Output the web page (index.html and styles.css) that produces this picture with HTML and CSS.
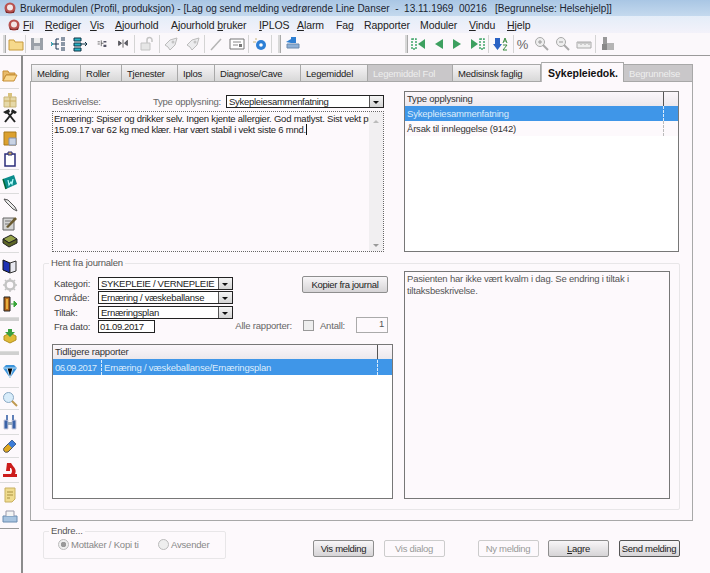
FILE: index.html
```html
<!DOCTYPE html>
<html lang="no">
<head>
<meta charset="utf-8">
<title>Brukermodulen</title>
<link rel="stylesheet" href="styles.css">
</head>
<body>
<svg class="defs" width="0" height="0">
  <symbol id="logo" viewBox="0 0 16 16"><circle cx="8" cy="8" r="5.500" fill="#b9524f"/><circle cx="8" cy="7.500" r="3" fill="#f3e6e6"/><path d="M3 10q5 5 10 0l-1 3H4z" fill="#7b2a2a"/></symbol>
  <symbol id="folder" viewBox="0 0 16 16"><path d="M1 4h5l1 2h8v8H1z" fill="#f6d98c" stroke="#c79a3c"/></symbol>
  <symbol id="folderopen" viewBox="0 0 16 16"><path d="M1 4h5l1 2h6v2H4l-3 6z" fill="#e8bb6b" stroke="#c58d35"/><path d="M4 8h11l-3 6H1z" fill="#f9d88f" stroke="#c58d35"/></symbol>
  <symbol id="save" viewBox="0 0 16 16"><path d="M2 2h12v12H2z" fill="#9aa0a8"/><path d="M5 2h6v5H5z" fill="#eee"/><path d="M5 10h6v4H5z" fill="#cfd2d6"/></symbol>
  <symbol id="tree1" viewBox="0 0 16 16"><path d="M1 8h5M6 3v10M6 3h3M6 8h3M6 13h3M11 2h4M11 4h4M11 7h4M11 9h4M11 12h4M11 14h4" stroke="#1b3450" fill="none"/><path d="M1 6l2 2-2 2" stroke="#18a8b8" fill="none"/></symbol>
  <symbol id="tree2" viewBox="0 0 16 16"><path d="M2 2h7v3H2zM2 7h7v3H2zM2 12h7v3H2z" fill="#29b6c8" stroke="#134"/><path d="M9 8h6M13 6l2 2-2 2" stroke="#134" fill="none"/></symbol>
  <symbol id="tree3" viewBox="-3 -3 22 22"><path d="M2 5h3M2 8h3M7 3v8M7 7h3" stroke="#444" fill="none"/><path d="M10 4h4v2h-4zM10 9h4v3h-4z" fill="#556"/></symbol>
  <symbol id="tree4" viewBox="-3 -3 22 22"><path d="M2 4l4 3-4 3zM14 3l-4 4 4 3zM8 2v11" stroke="#333" fill="#667"/></symbol>
  <symbol id="lock" viewBox="0 0 16 16"><path d="M2 7h9v7H2z" fill="#e6e6e6" stroke="#c4c4c4"/><path d="M8 7V4a2.500 2.500 0 0 1 5 0v2" fill="none" stroke="#c4c4c4" stroke-width="1.500"/></symbol>
  <symbol id="rocket" viewBox="0 0 16 16"><path d="M14 2l-2 7-5 5-2-3-3-2 5-5z" fill="#ececee" stroke="#bbb"/><circle cx="10" cy="6" r="1.500" fill="#c4c4c4"/></symbol>
  <symbol id="pen" viewBox="0 0 16 16"><path d="M3 14L13 3" stroke="#b4b4b4" stroke-width="1.500"/></symbol>
  <symbol id="box" viewBox="0 0 16 16"><path d="M1 3h14v10H1z" fill="#fff" stroke="#777"/><path d="M4 6h8M4 9h5" stroke="#888"/><path d="M10 8h3v3h-3z" fill="#777"/></symbol>
  <symbol id="disc" viewBox="0 0 16 16"><circle cx="9" cy="9" r="5" fill="#2d7fd6"/><circle cx="9" cy="9" r="1.800" fill="#fff"/><path d="M1 6h3M3 3h2" stroke="#c9b47a"/></symbol>
  <symbol id="print" viewBox="0 0 16 16"><path d="M6 1h5v6H6z" fill="#2f7fd2"/><path d="M2 8h12v4H2z" fill="#8fb0d6" stroke="#6b89ad"/><path d="M1 6l5-3v4z" fill="#2f7fd2"/></symbol>
  <symbol id="first" viewBox="0 0 16 16"><path d="M2 3h4v10H2z" fill="none" stroke="#43a56b" stroke-width="1.500" stroke-dasharray="2 1"/><path d="M15 3v10L8 8z" fill="#3da060"/></symbol>
  <symbol id="prev" viewBox="0 0 16 16"><path d="M13 3v10L5 8z" fill="#3da060"/></symbol>
  <symbol id="next" viewBox="0 0 16 16"><path d="M3 3v10l8-5z" fill="#3da060"/></symbol>
  <symbol id="last" viewBox="0 0 16 16"><path d="M10 3h4v10h-4z" fill="none" stroke="#43a56b" stroke-width="1.500" stroke-dasharray="2 1"/><path d="M1 3v10l7-5z" fill="#3da060"/></symbol>
  <symbol id="sort" viewBox="0 0 16 16"><path d="M2 2h5v6h2l-4.500 6L0 8h2z" fill="#2a62c4"/><path d="M10 7l2-5 2 5M11 5h2M10 9h4l-4 5h4" fill="none" stroke="#3a8a40"/></symbol>
  <symbol id="zoomin" viewBox="0 0 16 16"><circle cx="6" cy="6" r="4.500" fill="#eee" stroke="#a9a9a9"/><path d="M9 9l5 5" stroke="#a9a9a9" stroke-width="2"/><path d="M4 6h4M6 4v4" stroke="#999"/></symbol>
  <symbol id="zoomout" viewBox="0 0 16 16"><circle cx="6" cy="6" r="4.500" fill="#eee" stroke="#a9a9a9"/><path d="M9 9l5 5" stroke="#a9a9a9" stroke-width="2"/><path d="M4 6h4" stroke="#999"/></symbol>
  <symbol id="ruler" viewBox="0 0 16 16"><path d="M1 6h14v6H1z" fill="#eee" stroke="#aaa"/><path d="M3 6v2M5 6v3M7 6v2M9 6v3M11 6v2M13 6v3" stroke="#aaa"/></symbol>
  <symbol id="bag" viewBox="0 0 16 16"><path d="M3 1h4v7H3z" fill="#999"/><path d="M7 7h7v7H7z" fill="#b5b5b5"/><path d="M2 8h5v6H2z" fill="#888"/></symbol>
  <symbol id="pack" viewBox="0 0 16 16"><path d="M2 5h12v10H2z" fill="#e6d8a8" stroke="#c8b57a"/><path d="M6 1h4v4H6z" fill="#d9c27e"/><path d="M2 9h12" stroke="#c8a85a"/><path d="M8 5v10" stroke="#c8a85a"/></symbol>
  <symbol id="tools" viewBox="0 0 16 16"><path d="M3 14L11 4M13 14L5 4" stroke="#222" stroke-width="2"/><path d="M1 4l6-3 1 3-4 2zM15 4l-5-3-1 3 4 2z" fill="#222"/></symbol>
  <symbol id="note" viewBox="0 0 16 16"><path d="M2 1h12v13H2z" fill="#dca02e" stroke="#a87818"/><path d="M7 7h7v7H7z" fill="#c9d3e4" stroke="#8090b0"/></symbol>
  <symbol id="clip" viewBox="0 0 16 16"><path d="M3 3h10v12H3z" fill="#fff" stroke="#2b2c7a" stroke-width="1.500"/><path d="M6 1h4v3H6z" fill="#c9a85a" stroke="#2b2c7a"/></symbol>
  <symbol id="wbook" viewBox="0 0 16 16"><path d="M1 5l11-4 3 9-11 5z" fill="#0c8c8c"/><path d="M1 5l3 10" stroke="#063" stroke-width="1.500"/><path d="M6 6l1 5 2-3 1 2 1-5" fill="none" stroke="#bff" stroke-width="1.200"/></symbol>
  <symbol id="pin" viewBox="0 0 16 16"><path d="M2 2l4 1 7 7 2 4-4-2-7-7z" fill="#e8e8e8" stroke="#555"/></symbol>
  <symbol id="pdoc" viewBox="0 0 16 16"><path d="M1 3h11v12H1z" fill="#d4d4d4" stroke="#666"/><path d="M4 12l9-10 2 2-9 9z" fill="#6a5a30"/><path d="M3 6h6M3 9h4" stroke="#777"/></symbol>
  <symbol id="gbook" viewBox="0 0 16 16"><path d="M1 6l8-4 6 4-8 4z" fill="#96a24a" stroke="#222"/><path d="M1 6v4l6 4 8-4V6l-8 4z" fill="#5c6426" stroke="#222"/></symbol>
  <symbol id="bluebook" viewBox="0 0 16 16"><path d="M1 2l7 3v10l-7-3z" fill="#1e30b4" stroke="#111"/><path d="M8 5l6-2v10l-6 2z" fill="#e8e8f0" stroke="#333"/></symbol>
  <symbol id="gear" viewBox="0 0 16 16"><circle cx="8" cy="8" r="4.500" fill="none" stroke="#c4c4c4" stroke-width="2.500"/><path d="M8 1v3M8 12v3M1 8h3M12 8h3M3 3l2 2M11 11l2 2M13 3l-2 2M3 13l2-2" stroke="#c4c4c4" stroke-width="1.500"/></symbol>
  <symbol id="door" viewBox="0 0 16 16"><path d="M2 1h6v14H2z" fill="#b5671a" stroke="#222"/><path d="M4 3h2v10H4z" fill="#e8b040"/><path d="M9 8h3M12 5l3 3-3 3z" fill="#3aa63a" stroke="#3aa63a"/></symbol>
  <symbol id="gold" viewBox="0 0 16 16"><path d="M2 8l6-3 6 3v4l-6 3-6-3z" fill="#e0bb38" stroke="#b49020"/><path d="M6 1h4v3h3l-5 5-5-5h3z" fill="#3aa040"/></symbol>
  <symbol id="gem" viewBox="0 0 16 16"><path d="M1 5l3-3h8l3 3-7 10z" fill="#3c94dc"/><path d="M1 5h14M5 5l3 10 3-10" stroke="#bfe0f8"/></symbol>
  <symbol id="mag" viewBox="0 0 16 16"><circle cx="6.500" cy="6.500" r="5" fill="#d8ecfa" stroke="#8aa9c4"/><path d="M10 10l5 5" stroke="#c09a50" stroke-width="2"/></symbol>
  <symbol id="binoc" viewBox="0 0 16 16"><path d="M2 6h4v9H2zM10 6h4v9h-4z" fill="#3a62a8" stroke="#ccd"/><path d="M4 1h2v5H4zM10 1h2v5h-2z" fill="#5f7fb8"/><path d="M6 8h4v3H6z" fill="#9ab"/></symbol>
  <symbol id="pill" viewBox="0 0 16 16"><path d="M2 10l8-8 4 4-8 8q-3 1-4-1t0-3" fill="#e0a820" stroke="#555"/><path d="M6 6l4-4 4 4-4 4z" fill="#3c7cd8"/></symbol>
  <symbol id="micro" viewBox="0 0 16 16"><path d="M5 1h4l2 3q4 4 2 8h2v3H1v-3h8q2-3 0-6H8v3H4z" fill="#cc1c1c"/></symbol>
  <symbol id="ynote" viewBox="0 0 16 16"><path d="M3 1h10v11l-3 3H3z" fill="#f0dc90" stroke="#c8b060"/><path d="M5 5h6M5 8h6M5 11h3" stroke="#a89040"/></symbol>
  <symbol id="tray" viewBox="0 0 16 16"><path d="M1 8h14v6H1z" fill="#a8c4e0" stroke="#6a8cb0"/><path d="M4 8V3h8v5" fill="#f4f4f4" stroke="#99a"/></symbol>
</svg>

<header class="titlebar"><svg class="ic"><use href="#logo"/></svg><span class="title-text">Brukermodulen (Profil, produksjon) - [Lag og send melding vedrørende Line Danser&nbsp; -&nbsp; 13.11.1969&nbsp; 00216&nbsp;&nbsp; [Begrunnelse: Helsehjelp]]</span></header>

<nav class="menubar">
  <svg class="ic menu-logo"><use href="#logo"/></svg>
  <span class="mi m-fil"><u>F</u>il</span>
  <span class="mi m-red"><u>R</u>ediger</span>
  <span class="mi m-vis"><u>V</u>is</span>
  <span class="mi m-aj"><u>A</u>jourhold</span>
  <span class="mi m-ajb">Ajourhold <u>b</u>ruker</span>
  <span class="mi m-ipl"><u>I</u>PLOS</span>
  <span class="mi m-ala"><u>A</u>larm</span>
  <span class="mi m-fag">Fag</span>
  <span class="mi m-rap">Rapporter</span>
  <span class="mi m-mod">Moduler</span>
  <span class="mi m-vin"><u>V</u>indu</span>
  <span class="mi m-hje"><u>H</u>jelp</span>
</nav>

<div class="toolbar">
  <span class="handle"></span>
  <div class="tg w-a"><svg class="ic"><use href="#folder"/></svg></div>
  <div class="tg w-b"><svg class="ic"><use href="#save"/></svg><svg class="ic"><use href="#tree1"/></svg><svg class="ic"><use href="#tree2"/></svg><svg class="ic"><use href="#tree3"/></svg><svg class="ic"><use href="#tree4"/></svg></div>
  <div class="tg w-c"><svg class="ic"><use href="#lock"/></svg></div>
  <div class="tg w-d"><svg class="ic"><use href="#rocket"/></svg><svg class="ic"><use href="#rocket"/></svg></div>
  <div class="tg w-e"><svg class="ic"><use href="#pen"/></svg><svg class="ic"><use href="#box"/></svg></div>
  <div class="tg w-f"><svg class="ic"><use href="#disc"/></svg></div>
  <span class="handle h-mid"></span>
  <div class="tg w-g"><svg class="ic"><use href="#print"/></svg></div>
  <span class="handle h-right"></span>
  <div class="tg w-h"><svg class="ic"><use href="#first"/></svg><svg class="ic"><use href="#prev"/></svg><svg class="ic"><use href="#next"/></svg><svg class="ic"><use href="#last"/></svg></div>
  <div class="tg w-i"><svg class="ic"><use href="#sort"/></svg></div>
  <div class="tg w-j"><span class="pct">%</span><svg class="ic"><use href="#zoomin"/></svg><svg class="ic"><use href="#zoomout"/></svg><svg class="ic"><use href="#ruler"/></svg></div>
  <div class="tg w-k"><svg class="ic"><use href="#bag"/></svg></div>
</div>

<div class="workspace">
  <aside class="sidebar">
    <div class="sg h27"><svg class="ic"><use href="#folderopen"/></svg></div>
    <div class="sg h39"><svg class="ic"><use href="#pack"/></svg><svg class="ic"><use href="#tools"/></svg></div>
    <div class="sg h42 g4"><svg class="ic"><use href="#note"/></svg><svg class="ic"><use href="#clip"/></svg></div>
    <div class="sg h24"><svg class="ic"><use href="#wbook"/></svg></div>
    <div class="sg h59 g2"><svg class="ic"><use href="#pin"/></svg><svg class="ic"><use href="#pdoc"/></svg><svg class="ic"><use href="#gbook"/></svg></div>
    <div class="sg h65 g3"><svg class="ic"><use href="#bluebook"/></svg><svg class="ic"><use href="#gear"/></svg><svg class="ic"><use href="#door"/></svg></div>
    <div class="sg h34 grip"><svg class="ic"><use href="#gold"/></svg></div>
    <div class="sg h36 grip"><svg class="ic"><use href="#gem"/></svg></div>
    <div class="sg h22"><svg class="ic"><use href="#mag"/></svg></div>
    <div class="sg h25"><svg class="ic"><use href="#binoc"/></svg></div>
    <div class="sg h23"><svg class="ic"><use href="#pill"/></svg></div>
    <div class="sg h25"><svg class="ic"><use href="#micro"/></svg></div>
    <div class="sg h46 g5 sg-end"><svg class="ic"><use href="#ynote"/></svg><svg class="ic"><use href="#tray"/></svg></div>
  </aside>

  <main class="main">
    <div class="tabs">
      <span class="tab t50">Melding</span>
      <span class="tab t41">Roller</span>
      <span class="tab t56">Tjenester</span>
      <span class="tab t37">Iplos</span>
      <span class="tab t86">Diagnose/Cave</span>
      <span class="tab t67">Legemiddel</span>
      <span class="tab t85 off">Legemiddel Fol</span>
      <span class="tab t88">Medisinsk faglig</span>
      <span class="tab t83 active">Sykepleiedok.</span>
      <span class="tab t69 off">Begrunnelse</span>
    </div>

    <section class="panel">
      <div class="top">
        <div class="top-left">
          <div class="desc-row">
            <span class="lbl desc-lbl">Beskrivelse:</span>
            <span class="lbl">Type opplysning:</span>
            <span class="combo c-type"><span class="combo-v">Sykepleiesammenfatning</span><span class="combo-b"></span></span>
          </div>
          <div class="editor">
            <p class="editor-text">Ernæring: Spiser og drikker selv. Ingen kjente allergier. God matlyst. Sist vekt pr<br>15.09.17 var 62 kg med klær. Har vært stabil i vekt siste 6 mnd.<span class="caret"></span></p>
            <div class="scroll"><span class="up"></span><span class="down"></span></div>
          </div>
        </div>
        <div class="list l-type">
          <div class="list-head"><span class="hc-main">Type opplysning</span><span class="hc-end"></span></div>
          <div class="row sel"><span class="cell-main">Sykepleiesammenfatning</span><span class="cell-end"></span></div>
          <div class="row"><span class="cell-main">Årsak til innleggelse (9142)</span><span class="cell-end"></span></div>
        </div>
      </div>

      <fieldset class="group hent">
        <legend class="legend">Hent fra journalen</legend>
        <div class="hent-body">
          <div class="hent-left">
            <div class="form">
              <div class="fields">
                <span class="lbl dark">Kategori:</span><span class="combo c-f"><span class="combo-v">SYKEPLEIE / VERNEPLEIE</span><span class="combo-b"></span></span>
                <span class="lbl dark">Område:</span><span class="combo c-f"><span class="combo-v">Ernæring / væskeballanse</span><span class="combo-b"></span></span>
                <span class="lbl dark">Tiltak:</span><span class="combo c-f"><span class="combo-v">Ernæringsplan</span><span class="combo-b"></span></span>
                <span class="lbl dark">Fra dato:</span><span class="date">01.09.2017</span>
              </div>
              <div class="form-right">
                <button class="btn kopier" type="button">Kopier fra journal</button>
                <div class="alle">
                  <span class="lbl">Alle rapporter:</span>
                  <span class="check"></span>
                  <span class="lbl">Antall:</span>
                  <span class="count">1</span>
                </div>
              </div>
            </div>
            <div class="list l-rep">
              <div class="list-head"><span class="hc-main">Tidligere rapporter</span><span class="hc-end"></span></div>
              <div class="row sel"><span class="cell-date">06.09.2017</span><span class="cell-main">Ernæring / væskeballanse/Ernæringsplan</span><span class="cell-end"></span></div>
            </div>
          </div>
          <div class="journal">Pasienten har ikke vært kvalm i dag. Se endring i tiltak i tiltaksbeskrivelse.</div>
        </div>
      </fieldset>
    </section>

    <div class="footer">
      <fieldset class="group endre">
        <legend class="legend">Endre...</legend>
        <div class="endre-body">
          <span class="radio on"></span><span class="lbl r-lbl r-first">Mottaker / Kopi ti</span>
          <span class="radio"></span><span class="lbl r-lbl">Avsender</span>
        </div>
      </fieldset>
      <div class="actions">
        <button class="btn" type="button">Vis melding</button>
        <button class="btn dis" type="button">Vis dialog</button>
        <button class="btn dis gap-l" type="button">Ny melding</button>
        <button class="btn" type="button"><u>L</u>agre</button>
        <button class="btn strong" type="button">Send melding</button>
      </div>
    </div>
  </main>
</div>
</body>
</html>
```
FILE: styles.css
```css
* { box-sizing: border-box; }
html, body { margin: 0; padding: 0; }
body {
  width: 710px; height: 573px; overflow: hidden;
  background: #fdf9fc;
  font-family: "Liberation Sans", Arial, sans-serif;
  font-size: 9.500px; letter-spacing: -.2px; color: #222;
  display: flex; flex-direction: column;
}
.defs { position: absolute; }
.ic { width: 16px; height: 16px; flex: none; display: block; }

.titlebar {
  height: 16px; flex: none; display: flex; align-items: center; padding-left: 2px; gap: 2px;
  background: linear-gradient(#a9c6e4, #c4d9ee);
  font-size: 10px; letter-spacing: 0; color: #1a2430; white-space: pre;
}

.menubar {
  height: 17px; flex: none; display: flex; align-items: center; padding-left: 6px;
  background: linear-gradient(#e4edf8, #f3f2fa);
  font-size: 10.500px; letter-spacing: -.1px; color: #222;
}
.menu-logo { margin-right: 1px; }
.mi { display: block; flex: none; white-space: nowrap; }
.m-fil { width: 22px; }
.m-red { width: 45px; }
.m-vis { width: 25px; }
.m-aj { width: 56px; }
.m-ajb { width: 88px; }
.m-ipl { width: 38px; }
.m-ala { width: 39px; }
.m-fag { width: 28px; }
.m-rap { width: 56px; }
.m-mod { width: 49px; }
.m-vin { width: 38px; }

.toolbar {
  height: 23px; flex: none; display: flex; align-items: center; padding-left: 3px;
  background: #fbf8fb; border-bottom: 1px solid #9a9a9a;
}
.handle { width: 3px; height: 18px; background: #d8d8d8; border-right: 1px solid #aaa; flex: none; }
.h-mid { margin-left: 6px; }
.h-right { margin-left: 100px; }
.tg { height: 18px; flex: none; display: flex; align-items: center; justify-content: space-around; border-right: 1px solid #d4d4d4; }
.w-a { width: 20px; }
.w-b { width: 109px; }
.w-c { width: 25px; }
.w-d { width: 45px; }
.w-e { width: 44px; }
.w-f { width: 23px; }
.w-g { width: 24px; border-right: 0; }
.w-h { width: 81px; }
.w-i { width: 25px; }
.w-j { width: 82px; }
.w-k { width: 23px; border-right: 0; }
.pct { font-size: 13px; letter-spacing: 0; color: #666; }

.workspace { flex: 1; display: flex; min-height: 0; }
.sidebar {
  width: 23px; flex: none; padding-top: 6px; padding-right: 2px;
  border-right: 2px solid #8c8c8c; background: #fdf9fc;
}
.sg { display: flex; flex-direction: column; align-items: center; justify-content: center; border-bottom: 1px solid #dcdcdc; }
.sg-end { border-bottom-color: #999; }
.grip { border-top: 3px solid #d0d0d0; }
.g2 { gap: 2px; } .g3 { gap: 3px; } .g4 { gap: 4px; } .g5 { gap: 5px; }
.h22 { height: 22px; } .h23 { height: 23px; } .h24 { height: 24px; } .h25 { height: 25px; }
.h27 { height: 27px; } .h34 { height: 34px; } .h36 { height: 36px; } .h39 { height: 39px; }
.h42 { height: 42px; } .h46 { height: 46px; } .h59 { height: 59px; } .h65 { height: 65px; }

.main { flex: 1; min-width: 0; padding: 6px 0 0 7px; }
.tabs { display: flex; align-items: flex-end; height: 19px; padding-left: 1px; position: relative; z-index: 1; }
.tab {
  height: 17px; flex: none; display: flex; align-items: center; padding-left: 5px;
  background: linear-gradient(#f6f4f6, #d8d8d8);
  border: 1px solid #a8a8a8; border-bottom: 0; border-left: 0;
  white-space: nowrap; color: #222;
}
.t50 { width: 50px; border-left: 1px solid #a8a8a8; } .t41 { width: 41px; } .t56 { width: 56px; } .t37 { width: 37px; }
.t86 { width: 86px; } .t67 { width: 67px; } .t85 { width: 85px; } .t88 { width: 88px; }
.t83 { width: 83px; } .t69 { width: 69px; }
.off { background: #c9c7c9; color: #eeeeee; }
.active {
  height: 20px; margin-bottom: -1px; padding-left: 6px; background: #fdf9fc; font-weight: bold; font-size: 10.500px; letter-spacing: 0; color: #111;
  border-left: 1px solid #bbb;
}
.panel {
  width: 663px; height: 440px; border: 1px solid #a8a8a8; background: #fdf9fc;
  padding: 9px 12px 0 21px;
}
.top { display: flex; gap: 20px; height: 162px; }
.top-left { width: 332px; }
.lbl { color: #666; white-space: nowrap; }
.lbl.dark { color: #444; }
.desc-row { display: flex; align-items: center; height: 20px; padding-top: 1px; }
.desc-lbl { flex: 1; }
.combo { display: flex; height: 13px; border: 1px solid #222; background: #fff; letter-spacing: -.3px; color: #222; }
.c-type { width: 158px; margin-left: 5px; }
.combo-v { flex: 1; min-width: 0; padding-left: 2px; line-height: 11px; white-space: nowrap; overflow: hidden; }
.combo-b { width: 14px; flex: none; background: linear-gradient(#f4f4f4, #d4d4d4); border-left: 1px solid #555; position: relative; }
.combo-b::after {
  content: ""; position: absolute; left: 3px; top: 5px;
  border: 3px solid transparent; border-top: 3px solid #111; border-bottom: 0;
}
.editor { display: flex; height: 141px; border: 1px dotted #666; background: #fdf9fc; }
.editor-text { flex: 1; min-width: 0; margin: 0; padding: 1px 0 0 1px; letter-spacing: -.22px; line-height: 11px; color: #222; white-space: nowrap; }
.caret { display: inline-block; width: 1px; height: 11px; background: #111; vertical-align: -2px; }
.scroll { width: 14px; flex: none; background: #f1eff1; display: flex; flex-direction: column; justify-content: space-between; align-items: center; padding: 8px 0 4px; }
.up { border: 3px solid transparent; border-bottom: 3px solid #bbb; border-top: 0; }
.down { border: 3px solid transparent; border-top: 3px solid #999; border-bottom: 0; }

.list { border: 1px solid #777; background: #fff; }
.l-type { width: 275px; height: 161px; }
.list-head { display: flex; height: 14px; background: linear-gradient(#fbf7fb, #ece8ec); }
.hc-main { flex: 1; padding-left: 2px; line-height: 14px; color: #333; border-right: 1px solid #555; }
.hc-end { width: 14px; flex: none; }
.row { display: flex; height: 15px; align-items: center; color: #333; background: #fdf9fc; }
.row.sel { background: #3f96e8; color: #dcecfb; }
.l-rep .row.sel { height: 16px; }
.cell-main { flex: 1; padding-left: 2px; border-right: 1px dashed #bbb; line-height: 15px; }
.sel .cell-main { border-right-color: #dcecfb; }
.cell-end { width: 14px; flex: none; }
.cell-date { flex: none; width: 49px; padding-left: 2px; border-right: 1px dashed #dcecfb; line-height: 15px; letter-spacing: -.6px; }

.group { margin: 0; min-width: 0; border: 1px solid #e8e6e8; border-radius: 2px; padding: 0; }
.legend { padding: 0 2px; margin-left: 5px; color: #555; line-height: 10px; }
.hent { width: 637px; height: 252px; margin: 5px 0 0 -9px; padding: 3px 9px 0 0; }
.hent-body { display: flex; gap: 11px; height: 228px; padding-left: 8px; }
.hent-left { width: 349px; padding-right: 8px; flex: none; display: flex; flex-direction: column; margin-right: -8px; }
.form { display: flex; height: 68px; margin-top: 5px; }
.fields { display: grid; grid-template-columns: 44px 135px; grid-auto-rows: 14.500px; align-items: center; padding-left: 2px; width: 181px; flex: none; }
.c-f { width: 135px; }
.date { width: 57px; height: 13px; border: 1px solid #222; background: #fff; line-height: 11px; padding-left: 1px; letter-spacing: -.4px; }
.form-right { flex: 1; min-width: 0; display: flex; flex-direction: column; align-items: flex-end; padding-right: 5px; }
.btn {
  width: 61px; height: 17px; padding: 0; border: 1px solid #8e8e8e; border-radius: 2px;
  background: linear-gradient(#f8f6f8, #d6d4d6); font-family: inherit; font-size: 9.500px; letter-spacing: -.3px; color: #222; white-space: nowrap;
}
.kopier { width: 86px; }
.alle { display: flex; align-items: center; margin-top: 24px; flex: none; }
.check { width: 11px; height: 11px; border: 1px solid #999; background: #eee; margin: 0 6px 0 11px; flex: none; }
.count { width: 32px; height: 16px; border: 1px solid #aaa; margin-left: 11px; flex: none; text-align: right; padding-right: 3px; line-height: 12px; color: #555; }
.l-rep { width: 341px; height: 155px; }
.journal {
  width: 266px; height: 228px; border: 1px solid #777; padding: 1px 3px 2px 2px; flex: none;
  letter-spacing: -.2px; line-height: 12px; color: #555; background: #fdf9fc;
}

.footer { width: 637px; margin: 5px 0 0 13px; display: flex; }
.endre { width: 183px; height: 33px; flex: none; }
.endre-body { display: flex; align-items: center; height: 17px; padding-left: 14px; }
.radio { width: 11px; height: 11px; border-radius: 50%; border: 1px solid #bbb; background: #eee; flex: none; }
.radio.on { background: radial-gradient(circle, #999 0 2.500px, #eee 3px); }
.r-lbl { color: #888; margin-left: 2px; }
.r-first { width: 87px; flex: none; }
.actions { flex: 1; display: flex; gap: 9.500px; padding: 14px 0 0 87px; }
.actions .btn { flex: none; }
.dis { color: #999; background: #fdf9fc; border-color: #ccc; }
.gap-l { margin-left: 23.500px; }
.strong { border-color: #555; }
```
